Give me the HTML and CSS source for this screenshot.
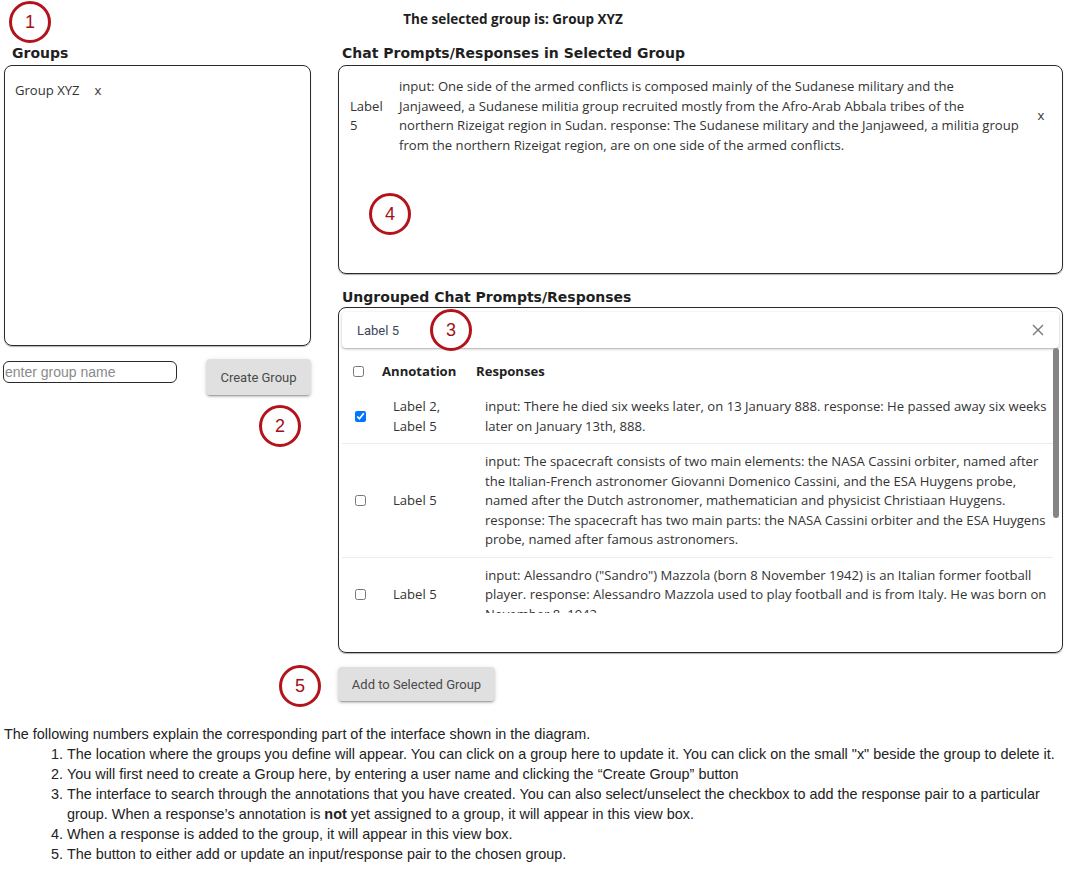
FILE: index.html
```html
<!DOCTYPE html>
<html lang="en">
<head>
<meta charset="utf-8">
<title>Groups</title>
<link rel="stylesheet" href="styles.css">
</head>
<body>
<div class="page">
  <div class="title">The selected group is: Group XYZ</div>
  <div class="main">
    <section class="left">
      <h2 class="heading heading-groups">Groups</h2>
      <div class="groups-box">
        <div class="group-item"><span>Group XYZ</span><span class="group-del">x</span></div>
      </div>
      <div class="create-row">
        <input class="group-input" type="text" placeholder="enter group name">
        <button class="btn btn-create">Create Group</button>
      </div>
    </section>
    <section class="right">
      <h2 class="heading">Chat Prompts/Responses in Selected Group</h2>
      <div class="selected-box">
        <div class="sel-row">
          <div class="sel-label">Label 5</div>
          <div class="sel-text">input: One side of the armed conflicts is composed mainly of the Sudanese military and the Janjaweed, a Sudanese militia group recruited mostly from the Afro-Arab Abbala tribes of the northern Rizeigat region in Sudan. response: The Sudanese military and the Janjaweed, a militia group from the northern Rizeigat region, are on one side of the armed conflicts.</div>
          <div class="sel-del">x</div>
        </div>
      </div>
      <h2 class="heading heading-ungrouped">Ungrouped Chat Prompts/Responses</h2>
      <div class="ungrouped-box">
        <div class="search">
          <span class="search-value">Label 5</span>
          <svg class="search-clear" width="12" height="12" viewBox="0 0 12 12"><path d="M1 1 L11 11 M11 1 L1 11" stroke="#777" stroke-width="1.4" fill="none"/></svg>
        </div>
        <div class="list-wrap">
          <div class="list">
            <div class="row row-head">
              <div class="cell cell-cb"><input type="checkbox" class="cb"></div>
              <div class="cell cell-anno">Annotation</div>
              <div class="cell cell-resp">Responses</div>
            </div>
            <div class="row">
              <div class="cell cell-cb"><input type="checkbox" class="cb" checked></div>
              <div class="cell cell-anno">Label 2, Label 5</div>
              <div class="cell cell-resp">input: There he died six weeks later, on 13 January 888. response: He passed away six weeks later on January 13th, 888.</div>
            </div>
            <div class="row">
              <div class="cell cell-cb"><input type="checkbox" class="cb"></div>
              <div class="cell cell-anno">Label 5</div>
              <div class="cell cell-resp">input: The spacecraft consists of two main elements: the NASA Cassini orbiter, named after the Italian-French astronomer Giovanni Domenico Cassini, and the ESA Huygens probe, named after the Dutch astronomer, mathematician and physicist Christiaan Huygens. response: The spacecraft has two main parts: the NASA Cassini orbiter and the ESA Huygens probe, named after famous astronomers.</div>
            </div>
            <div class="row">
              <div class="cell cell-cb"><input type="checkbox" class="cb"></div>
              <div class="cell cell-anno">Label 5</div>
              <div class="cell cell-resp">input: Alessandro ("Sandro") Mazzola (born 8 November 1942) is an Italian former football player. response: Alessandro Mazzola used to play football and is from Italy. He was born on November 8, 1942.</div>
            </div>
          </div>
          <div class="scroll-thumb"></div>
        </div>
      </div>
      <button class="btn btn-add">Add to Selected Group</button>
    </section>
  </div>
  <div class="explain">
    <p class="explain-intro">The following numbers explain the corresponding part of the interface shown in the diagram.</p>
    <ol class="explain-list">
      <li>The location where the groups you define will appear. You can click on a group here to update it. You can click on the small "x" beside the group to delete it.</li>
      <li>You will first need to create a Group here, by entering a user name and clicking the “Create Group” button</li>
      <li>The interface to search through the annotations that you have created. You can also select/unselect the checkbox to add the response pair to a particular group. When a response’s annotation is <b>not</b> yet assigned to a group, it will appear in this view box.</li>
      <li>When a response is added to the group, it will appear in this view box.</li>
      <li>The button to either add or update an input/response pair to the chosen group.</li>
    </ol>
  </div>
  <span class="marker m1">1</span>
  <span class="marker m2">2</span>
  <span class="marker m3">3</span>
  <span class="marker m4">4</span>
  <span class="marker m5">5</span>
</div>
</body>
</html>
```

FILE: styles.css
```css
html, body {
  margin: 0;
  padding: 0;
  background: #ffffff;
}

.page {
  position: relative;
  width: 1076px;
  min-height: 874px;
  font-family: "Open Sans", "Noto Sans", sans-serif;
  font-size: 13.1px;
  color: #333;
}

.title {
  padding: 10px 50px 0 0;
  height: 18px;
  line-height: 18px;
  text-align: center;
  font-weight: 700;
  font-size: 13.5px;
  color: #1e1e1e;
}

.main {
  display: flex;
  align-items: flex-start;
  margin-top: 16px;
  padding-left: 3px;
}

.heading {
  margin: 0 0 3px 4px;
  font-family: "DejaVu Sans", sans-serif;
  font-weight: 700;
  font-size: 14px;
  line-height: 18px;
  color: #1f1f1f;
}

.left {
  width: 308px;
  display: flex;
  flex-direction: column;
}

.heading-groups {
  margin-left: 9px;
}

.groups-box {
  margin-left: 1px;
  height: 281px;
  box-sizing: border-box;
  border: 1px solid #2a2a2a;
  border-radius: 8px;
  box-shadow: 0 1px 1px rgba(0, 0, 0, 0.3);
  padding: 15px 10px;
}

.group-item {
  line-height: 19.5px;
  color: #333;
}

.group-del {
  margin-left: 15px;
}

.create-row {
  display: flex;
  justify-content: space-between;
  align-items: flex-start;
  margin-top: 13px;
}

.group-input {
  margin: 2px 0 0 0;
  width: 174px;
  height: 22px;
  box-sizing: border-box;
  border: 1px solid #2a2a2a;
  border-radius: 6px;
  padding: 0 1px;
  font-family: "Liberation Sans", Arial, sans-serif;
  font-size: 14px;
  color: #333;
  outline: none;
}

.group-input::placeholder {
  color: #8a8a8a;
}

.btn {
  border: 0;
  border-radius: 4px;
  background: #e0e0e0;
  color: #4a4a4a;
  font-family: Roboto, "Liberation Sans", sans-serif;
  font-size: 13px;
  padding: 0;
  cursor: pointer;
  box-shadow: 0 3px 1px -2px rgba(0, 0, 0, 0.2), 0 2px 2px 0 rgba(0, 0, 0, 0.14), 0 1px 5px 0 rgba(0, 0, 0, 0.12);
}

.btn-create {
  width: 105px;
  height: 36px;
}

.right {
  margin-left: 27px;
  width: 725px;
  display: flex;
  flex-direction: column;
  align-items: flex-start;
}

.selected-box {
  width: 100%;
  height: 209px;
  box-sizing: border-box;
  border: 1px solid #2a2a2a;
  border-radius: 8px;
  box-shadow: 0 1px 1px rgba(0, 0, 0, 0.3);
  padding: 11px 0 0 11px;
}

.sel-row {
  display: flex;
  align-items: center;
  line-height: 19.5px;
}

.sel-label {
  width: 36px;
  margin-right: 13px;
  flex: none;
}

.sel-text {
  flex: none;
  width: 621px;
}

.sel-del {
  flex: 1;
  text-align: center;
}

.heading-ungrouped {
  margin-top: 14px;
  margin-bottom: 1px;
}

.ungrouped-box {
  width: 100%;
  box-sizing: border-box;
  border: 1px solid #2a2a2a;
  border-radius: 8px;
  box-shadow: 0 1px 1px rgba(0, 0, 0, 0.3);
  padding: 4px 3px 39px 3px;
}

.search {
  height: 36px;
  display: flex;
  align-items: center;
  justify-content: space-between;
  padding: 0 15px;
  border-radius: 4px;
  background: #fff;
  box-shadow: 0 1px 3px rgba(0, 0, 0, 0.25), 0 1px 1px rgba(0, 0, 0, 0.1);
}

.search-value {
  font-family: Roboto, "Liberation Sans", sans-serif;
  font-size: 13px;
  color: #3b4759;
}

.list-wrap {
  position: relative;
  height: 265px;
}

.list {
  height: 100%;
  padding-right: 6px;
  overflow: hidden;
}

.scroll-thumb {
  position: absolute;
  top: 0;
  right: 0;
  width: 6px;
  height: 170px;
  border-radius: 3px;
  background: #858585;
}

.row {
  display: grid;
  grid-template-columns: 40px 94px 1fr;
  align-items: center;
  padding: 8px 0 7px;
  border-bottom: 1px solid #ececec;
  line-height: 19.5px;
}

.row:last-child {
  border-bottom: 0;
}

.row-head {
  padding: 14px 0 7.5px;
  border-bottom: 0;
  font-weight: 700;
  color: #222;
}

.cell-cb {
  padding-left: 13px;
  display: flex;
  align-items: center;
}

.row-head .cell-cb {
  padding-left: 11px;
}

.cb {
  margin: 0;
  width: 11px;
  height: 11px;
}

.cell-anno {
  padding-left: 11px;
  padding-right: 4px;
}

.row-head .cell-anno {
  padding-left: 0;
}

.cell-resp {
  padding: 0 6px 0 9px;
}

.row-head .cell-resp {
  padding-left: 0;
}

.btn-add {
  margin-top: 14px;
  width: 157px;
  height: 34px;
}

.explain {
  margin-top: 23px;
  padding-left: 4px;
  font-family: "Liberation Sans", Arial, sans-serif;
  font-size: 14.4px;
  line-height: 20px;
  color: #222;
}

.explain-intro {
  margin: 0;
}

.explain-list {
  margin: 0;
  padding-left: 63px;
}

.marker {
  position: absolute;
  width: 36px;
  height: 36px;
  border: 3px solid #b3141c;
  border-radius: 50%;
  display: flex;
  align-items: center;
  justify-content: center;
  font-family: "Liberation Sans", Arial, sans-serif;
  font-size: 18px;
  color: #a30f15;
  background: transparent;
}

.m1 { left: 9px; top: 1px; }
.m2 { left: 259px; top: 405px; }
.m3 { left: 430px; top: 309px; }
.m4 { left: 369px; top: 193px; }
.m5 { left: 279px; top: 665px; }
```
